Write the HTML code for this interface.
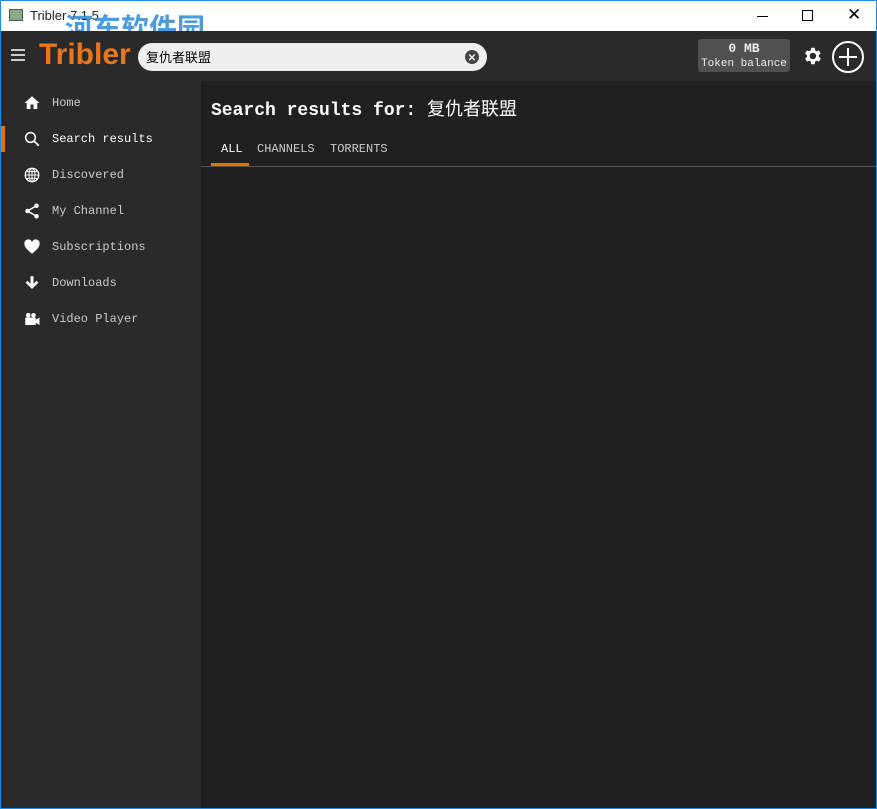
<!DOCTYPE html>
<html><head><meta charset="utf-8"><style>
*{margin:0;padding:0;box-sizing:border-box}
body{width:877px;height:809px;overflow:hidden;background:#1e88e5;font-family:"Liberation Mono","Noto Sans CJK SC",monospace;position:relative}
#win{position:absolute;left:1px;top:1px;right:1px;bottom:1px;background:#202020}
#title{position:absolute;left:0;top:0;width:875px;height:30px;background:#fff;font-family:"Liberation Sans",sans-serif;font-size:13px;color:#222}
#top{position:absolute;left:0;top:30px;width:875px;height:50px;background:#2a2a2a}
#side{position:absolute;left:0;top:80px;width:200px;bottom:0;background:#2a2a2a}
.it{position:absolute;left:22px;height:20px;font-size:12px;color:#ccc;display:flex;align-items:center}
.it svg{width:18px;height:18px;margin-right:11px;fill:#fff}
.it span{white-space:nowrap}
</style></head><body><div id="win">
<div id="title">
<div style="position:absolute;left:8px;top:8px;width:14px;height:12px;border:1px solid #555;background:#8a8"></div>
<div style="position:absolute;left:29px;top:7px">Tribler 7.1.5</div>
<div style="position:absolute;left:64px;top:10px;font-family:'Noto Sans CJK SC',sans-serif;font-weight:bold;font-size:28px;color:#2d8ad6;opacity:.85;line-height:32px">河东软件园</div>
<div style="position:absolute;left:756px;top:15px;width:11px;height:1px;background:#000"></div>
<div style="position:absolute;left:801px;top:9px;width:11px;height:11px;border:1px solid #000"></div>
<div style="position:absolute;left:846px;top:4px;font-size:17px;color:#000">✕</div>
</div>
<div id="top">
<div style="position:absolute;left:10px;top:18px;width:14px;height:2px;background:#ccc;box-shadow:0 5px 0 #ccc,0 10px 0 #ccc"></div>
<div style="position:absolute;left:38px;top:7px;font-family:'Liberation Sans',sans-serif;font-weight:bold;font-size:30px;color:#e9771f">Tribler</div>
<div style="position:absolute;left:137px;top:12px;width:349px;height:28px;border-radius:14px;background:#eee;font-family:'Noto Sans CJK SC',sans-serif;font-size:13px;color:#000;line-height:28px;padding-left:8px">复仇者联盟
<div style="position:absolute;right:8px;top:7px;width:14px;height:14px;border-radius:50%;background:#444;color:#eee;font-size:10px;line-height:14px;text-align:center;font-weight:bold">✕</div></div>
<div style="position:absolute;left:697px;top:8px;width:92px;height:33px;border-radius:3px;background:#505050;color:#eee;text-align:center;font-size:11px;line-height:14px;padding-top:3px"><b style="font-size:13px">0 MB</b><br>Token balance</div>
<svg style="position:absolute;left:800px;top:14px" width="22" height="22" viewBox="0 0 24 24"><path fill="#fff" d="M19.4 13a7.5 7.5 0 000-2l2.1-1.6-2-3.5-2.5 1a7.6 7.6 0 00-1.7-1L15 3h-4l-.4 2.9a7.6 7.6 0 00-1.7 1l-2.5-1-2 3.5L6.6 11a7.5 7.5 0 000 2l-2.1 1.6 2 3.5 2.5-1a7.6 7.6 0 001.7 1L11 21h4l.4-2.9a7.6 7.6 0 001.7-1l2.5 1 2-3.5zM13 15.5a3.5 3.5 0 110-7 3.5 3.5 0 010 7z"/></svg>
<svg style="position:absolute;left:830px;top:9px" width="34" height="34" viewBox="0 0 34 34"><circle cx="17" cy="17" r="15" fill="none" stroke="#fff" stroke-width="2"/><path d="M17 8v18M8 17h18" stroke="#fff" stroke-width="2"/></svg>
</div>
<div id="side">
<div style="position:absolute;left:0;top:45px;width:4px;height:26px;background:#e67300"></div>
<div class="it" style="top:12px"><svg viewBox="0 0 24 24"><path d="M10 20v-6h4v6h5v-8h3L12 3 2 12h3v8z"/></svg><span>Home</span></div>
<div class="it" style="top:48px;color:#fff"><svg viewBox="0 0 24 24"><circle cx="10" cy="10" r="6.5" fill="none" stroke="#fff" stroke-width="2"/><path d="M15 15l6 6" stroke="#fff" stroke-width="2.2"/></svg><span>Search results</span></div>
<div class="it" style="top:84px"><svg viewBox="0 0 24 24"><circle cx="12" cy="12" r="9" fill="none" stroke="#fff" stroke-width="1.8"/><path d="M3 12h18M12 3v18M5 7.5h14M5 16.5h14" stroke="#fff" stroke-width="1.3" fill="none"/><ellipse cx="12" cy="12" rx="4" ry="9" fill="none" stroke="#fff" stroke-width="1.3"/></svg><span>Discovered</span></div>
<div class="it" style="top:120px"><svg viewBox="0 0 24 24"><circle cx="18" cy="5" r="3"/><circle cx="6" cy="12" r="3"/><circle cx="18" cy="19" r="3"/><path d="M6 12L18 5M6 12l12 7" stroke="#fff" stroke-width="2"/></svg><span>My Channel</span></div>
<div class="it" style="top:156px"><svg viewBox="0 0 24 24"><path d="M12 21l-1.5-1.3C5 15 2 12 2 8.5A5 5 0 0112 5.5a5 5 0 0110 3c0 3.5-3 6.5-8.5 11.2z"/></svg><span>Subscriptions</span></div>
<div class="it" style="top:192px"><svg viewBox="0 0 24 24"><path d="M10 3h4v10l4-4 2.5 2.5L12 20l-8.5-8.5L6 9l4 4z"/></svg><span>Downloads</span></div>
<div class="it" style="top:228px"><svg viewBox="0 0 24 24"><circle cx="7" cy="7" r="3"/><circle cx="14" cy="7" r="3"/><rect x="3" y="10" width="14" height="10"/><path d="M17 13l5-3v10l-5-3z"/></svg><span>Video Player</span></div>
</div>
<div style="position:absolute;left:210px;top:94px;font-size:18px;font-weight:bold;color:#fff">Search results for: <span style="font-family:'Noto Sans CJK SC',sans-serif;font-weight:normal">复仇者联盟</span></div>
<div style="position:absolute;left:220px;top:141px;font-size:12px;color:#fff">ALL</div>
<div style="position:absolute;left:256px;top:141px;font-size:12px;color:#ccc">CHANNELS</div>
<div style="position:absolute;left:329px;top:141px;font-size:12px;color:#ccc">TORRENTS</div>
<div style="position:absolute;left:210px;top:162px;width:38px;height:3px;background:#e67300"></div>
<div style="position:absolute;left:200px;top:165px;width:675px;height:1px;background:#555"></div>
</div></body></html>
